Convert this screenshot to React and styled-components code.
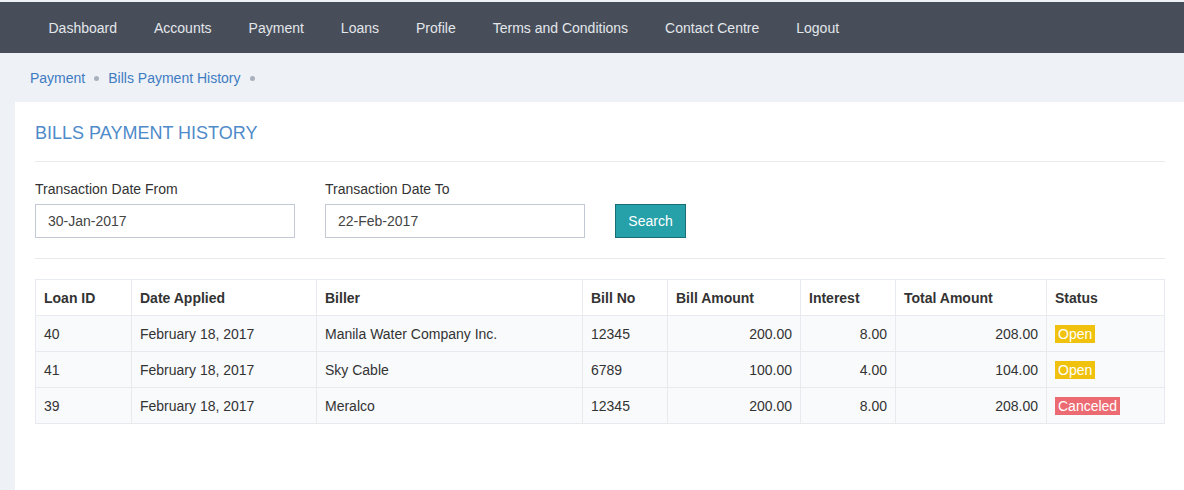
import React from "react";
import styled, { createGlobalStyle } from "styled-components";

const GlobalStyle = createGlobalStyle`
  html, body {
    margin: 0;
    padding: 0;
    background: #eef1f6;
    font-family: "Liberation Sans", Arial, sans-serif;
    font-size: 14px;
    color: #333;
  }
`;

const navItems = [
  "Dashboard",
  "Accounts",
  "Payment",
  "Loans",
  "Profile",
  "Terms and Conditions",
  "Contact Centre",
  "Logout",
];

const rows = [
  { id: "40", date: "February 18, 2017", biller: "Manila Water Company Inc.", no: "12345", amount: "200.00", interest: "8.00", total: "208.00", status: "Open" },
  { id: "41", date: "February 18, 2017", biller: "Sky Cable", no: "6789", amount: "100.00", interest: "4.00", total: "104.00", status: "Open" },
  { id: "39", date: "February 18, 2017", biller: "Meralco", no: "12345", amount: "200.00", interest: "8.00", total: "208.00", status: "Canceled" },
];

const App = () => {
  return (
    <Page>
      <GlobalStyle />
      <Nav>
        {navItems.map((item) => (
          <NavLink key={item} href="#">
            {item}
          </NavLink>
        ))}
      </Nav>
      <Breadcrumb>
        <Crumb href="#">Payment</Crumb>
        <Dot />
        <Crumb href="#">Bills Payment History</Crumb>
        <Dot />
      </Breadcrumb>
      <Panel>
        <Title>BILLS PAYMENT HISTORY</Title>
        <Divider />
        <Filters>
          <Field>
            <Label>Transaction Date From</Label>
            <Input defaultValue="30-Jan-2017" />
          </Field>
          <Field>
            <Label>Transaction Date To</Label>
            <Input defaultValue="22-Feb-2017" />
          </Field>
          <SearchButton>Search</SearchButton>
        </Filters>
        <Divider />
        <Table>
          <colgroup>
            <col style={{ width: 96 }} />
            <col style={{ width: 185 }} />
            <col style={{ width: 266 }} />
            <col style={{ width: 85 }} />
            <col style={{ width: 133 }} />
            <col style={{ width: 95 }} />
            <col style={{ width: 151 }} />
            <col style={{ width: 118 }} />
          </colgroup>
          <thead>
            <tr>
              <Th>Loan ID</Th>
              <Th>Date Applied</Th>
              <Th>Biller</Th>
              <Th>Bill No</Th>
              <Th>Bill Amount</Th>
              <Th>Interest</Th>
              <Th>Total Amount</Th>
              <Th>Status</Th>
            </tr>
          </thead>
          <tbody>
            {rows.map((r) => (
              <Row key={r.id}>
                <Td>{r.id}</Td>
                <Td>{r.date}</Td>
                <Td>{r.biller}</Td>
                <Td>{r.no}</Td>
                <Td $right>{r.amount}</Td>
                <Td $right>{r.interest}</Td>
                <Td $right>{r.total}</Td>
                <Td>
                  <Badge $status={r.status}>{r.status}</Badge>
                </Td>
              </Row>
            ))}
          </tbody>
        </Table>
      </Panel>
    </Page>
  );
};

const Page = styled.div`
  min-height: 490px;
  display: flex;
  flex-direction: column;
  padding-top: 2px;
  box-sizing: border-box;
`;

const Nav = styled.nav`
  background: #474e5a;
  height: 51px;
  display: flex;
  align-items: center;
  padding-left: 30px;
`;

const NavLink = styled.a`
  color: #e3e6ea;
  text-decoration: none;
  font-size: 14px;
  padding: 0 18.5px;
`;

const Breadcrumb = styled.div`
  height: 49px;
  display: flex;
  align-items: center;
  padding-left: 30px;
  gap: 9px;
`;

const Crumb = styled.a`
  color: #3e7cc2;
  text-decoration: none;
  font-size: 14px;
`;

const Dot = styled.span`
  width: 5px;
  height: 5px;
  border-radius: 50%;
  background: #a9b1bd;
  margin-top: 2px;
`;

const Panel = styled.div`
  flex: 1;
  background: #fff;
  margin-left: 15px;
  padding: 20px 19px 40px 20px;
`;

const Title = styled.h2`
  margin: 0;
  font-weight: normal;
  font-size: 18px;
  color: #4f8ac9;
  line-height: 20px;
  padding-top: 1px;
  padding-bottom: 18px;
`;

const Divider = styled.hr`
  border: none;
  border-top: 1px solid #e8ebee;
  margin: 0;
`;

const Filters = styled.div`
  display: flex;
  align-items: flex-end;
  gap: 30px;
  padding: 18px 0 20px;
`;

const Field = styled.div`
  display: flex;
  flex-direction: column;
  gap: 7px;
`;

const Label = styled.label`
  font-size: 14px;
  color: #333;
  line-height: 16px;
  padding-top: 1px;
`;

const Input = styled.input`
  width: 260px;
  height: 34px;
  box-sizing: border-box;
  border: 1px solid #c3cad6;
  padding: 0 12px;
  font-family: "Liberation Sans", Arial, sans-serif;
  font-size: 14px;
  color: #444;
  outline: none;
`;

const SearchButton = styled.button`
  height: 34px;
  width: 71px;
  background: #26a1a9;
  border: 1px solid #1b6e75;
  color: #fff;
  font-family: "Liberation Sans", Arial, sans-serif;
  font-size: 14px;
  cursor: pointer;
`;

const Table = styled.table`
  margin-top: 20px;
  width: 1129px;
  border-collapse: collapse;
  table-layout: fixed;
  border: 1px solid #e7eaee;
`;

const Th = styled.th`
  text-align: left;
  font-weight: bold;
  color: #333;
  height: 36px;
  padding: 0 8px;
  border: 1px solid #e7eaee;
  box-sizing: border-box;
`;

const Row = styled.tr`
  background: #f9fafc;
`;

const Td = styled.td`
  height: 36px;
  padding: 0 8px;
  border: 1px solid #e7eaee;
  text-align: ${(p) => (p.$right ? "right" : "left")};
  color: #333;
  box-sizing: border-box;
`;

const Badge = styled.span`
  display: inline-block;
  color: #fff;
  font-size: 14px;
  line-height: 18px;
  padding: 0 3px;
  background: ${(p) => (p.$status === "Canceled" ? "#ec6b72" : "#f0c20e")};
`;

export default App;
